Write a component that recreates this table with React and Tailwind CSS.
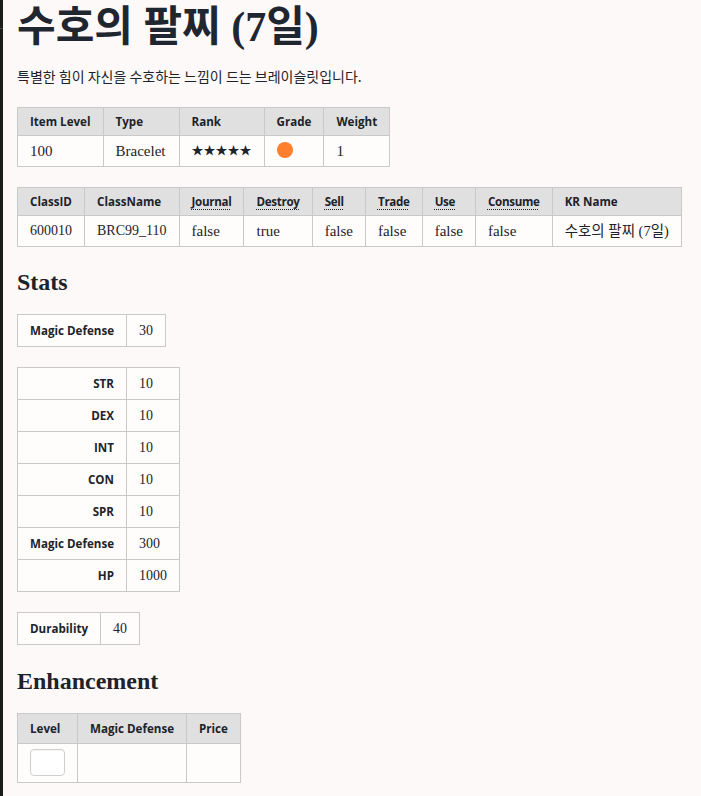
import React from "react";

const serif = "font-['Liberation_Serif','Noto_Sans_CJK_KR',serif]";
const sans = "font-['Open_Sans','Noto_Sans_CJK_KR',sans-serif]";

const th = `border border-[#c9c9c9] bg-[#e0e0e0] px-3 py-[5px] text-left text-[11.6px] font-bold leading-[17px] whitespace-nowrap text-[#1d232b] ${sans}`;
// body cell without font size, so each table can pick its own
const cell = `border border-[#c9c9c9] bg-[#fffdfc] px-3 py-[5px] text-left whitespace-nowrap text-[#1d232b] ${serif}`;
const td = `${cell} text-[14px] leading-[21px]`;
const tdRow = `${cell} text-[15px] leading-[20px]`;
const tdSm = `${cell} text-[14px] leading-[20px]`;
const sideTh = `border border-[#c9c9c9] bg-[#fffdfc] px-3 py-[5px] text-right text-[11.6px] font-bold leading-[21px] whitespace-nowrap text-[#1d232b] ${sans}`;

const flags = [
  ["Journal", "false"],
  ["Destroy", "true"],
  ["Sell", "false"],
  ["Trade", "false"],
  ["Use", "false"],
  ["Consume", "false"],
];

const stats = [
  ["STR", "10"],
  ["DEX", "10"],
  ["INT", "10"],
  ["CON", "10"],
  ["SPR", "10"],
  ["Magic Defense", "300"],
  ["HP", "1000"],
];

const Heading = ({ children, className = "" }) => (
  <h2 className={`mt-[21px] mb-[17px] text-[24px] font-bold leading-[29px] text-[#1d232b] ${serif} ${className}`}>
    {children}
  </h2>
);

const App = () => {
  return (
    <div className="flex min-h-screen bg-[#fdf9f8]">
      {/* dark edge on the left */}
      <div className="w-[3px] shrink-0 bg-[#1c1c1c]">
        <div className="mt-[28px] h-px bg-[#4a4a4a]" />
      </div>

      <div className="pl-[14px] pt-[2px] pb-4">
        <h1 className={`text-[42px] font-bold leading-[50px] text-[#1f2630] ${serif}`}>
          수호의 팔찌 (7일)
        </h1>
        <p className="mt-[14px] text-[14px] leading-[21px] text-[#1d232b] font-['Noto_Sans_CJK_KR',sans-serif]">
          특별한 힘이 자신을 수호하는 느낌이 드는 브레이슬릿입니다.
        </p>

        {/* ===== Basic info ===== */}
        <table className="mt-[20px] border-collapse">
          <thead>
            <tr>
              <th className={`${th} w-[85px]`}>Item Level</th>
              <th className={`${th} w-[76px]`}>Type</th>
              <th className={`${th} w-[85px]`}>Rank</th>
              <th className={th}>Grade</th>
              <th className={th}>Weight</th>
            </tr>
          </thead>
          <tbody>
            <tr>
              <td className={tdRow}>100</td>
              <td className={tdRow}>Bracelet</td>
              <td className={`${cell} text-[12px] leading-[20px]`}>★★★★★</td>
              <td className={tdRow}>
                <span className="inline-block h-4 w-4 rounded-full bg-[#ff7f2e] align-[-2px]" />
              </td>
              <td className={tdRow}>1</td>
            </tr>
          </tbody>
        </table>

        {/* ===== Class info ===== */}
        <table className="mt-5 border-collapse">
          <thead>
            <tr>
              <th className={th}>ClassID</th>
              <th className={th}>ClassName</th>
              {flags.map(([name]) => (
                <th key={name} className={`${th} tracking-[-0.3px]`}>
                  <span className="underline decoration-dotted decoration-1 underline-offset-[3px]">
                    {name}
                  </span>
                </th>
              ))}
              <th className={th}>KR Name</th>
            </tr>
          </thead>
          <tbody>
            <tr>
              <td className={tdSm}>600010</td>
              <td className={tdSm}>BRC99_110</td>
              {flags.map(([name, v]) => (
                <td key={name} className={`${cell} text-[15px] leading-[20px]`}>
                  {v}
                </td>
              ))}
              <td className={`${cell} text-[14.5px] leading-[20px]`}>수호의 팔찌 (7일)</td>
            </tr>
          </tbody>
        </table>

        <Heading>Stats</Heading>

        <table className="border-collapse">
          <tbody>
            <tr>
              <th className={sideTh}>Magic Defense</th>
              <td className={td}>30</td>
            </tr>
          </tbody>
        </table>

        <table className="mt-5 border-collapse">
          <tbody>
            {stats.map(([k, v]) => (
              <tr key={k}>
                <th className={sideTh}>{k}</th>
                <td className={td}>{v}</td>
              </tr>
            ))}
          </tbody>
        </table>

        <table className="mt-5 border-collapse">
          <tbody>
            <tr>
              <th className={sideTh}>Durability</th>
              <td className={td}>40</td>
            </tr>
          </tbody>
        </table>

        <Heading className="mt-[22px]">Enhancement</Heading>

        <table className="border-collapse">
          <thead>
            <tr>
              <th className={`${th} py-[6px] text-center`}>Level</th>
              <th className={`${th} py-[6px] text-center`}>Magic Defense</th>
              <th className={`${th} py-[6px] text-center`}>Price</th>
            </tr>
          </thead>
          <tbody>
            <tr>
              <td className={`${cell} pt-[5px] pb-[6px]`}>
                <div className="h-[27px] w-[35px] rounded-[4px] border border-[#cfcfcf] bg-white shadow-[inset_0_1px_1px_rgba(0,0,0,0.04)]" />
              </td>
              <td className={cell}></td>
              <td className={cell}></td>
            </tr>
          </tbody>
        </table>
      </div>
    </div>
  );
};

export default App;
